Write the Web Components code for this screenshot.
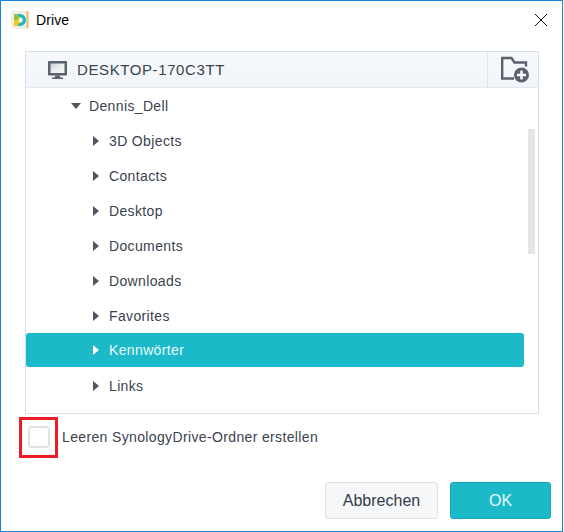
<!DOCTYPE html>
<html>
<head>
<meta charset="utf-8">
<style>
  html, body { margin: 0; padding: 0; background: #fff; }
  body { width: 564px; height: 532px; overflow: hidden; font-family: "Liberation Sans", Arial, sans-serif; }
</style>
</head>
<body>
<drive-dialog>
  <drive-tree host-name="DESKTOP-170C3TT">
    <tree-row level="0" open>Dennis_Dell</tree-row>
    <tree-row>3D Objects</tree-row>
    <tree-row>Contacts</tree-row>
    <tree-row>Desktop</tree-row>
    <tree-row>Documents</tree-row>
    <tree-row>Downloads</tree-row>
    <tree-row>Favorites</tree-row>
    <tree-row selected>Kennwörter</tree-row>
    <tree-row>Links</tree-row>
  </drive-tree>
  <check-row>Leeren SynologyDrive-Ordner erstellen</check-row>
  <div slot="actions" style="display:flex;gap:12px">
    <dlg-button>Abbrechen</dlg-button>
    <dlg-button primary>OK</dlg-button>
  </div>
</drive-dialog>

<script>
class DriveDialog extends HTMLElement {
    connectedCallback() {
        this.attachShadow({ mode: 'open' });
        this.shadowRoot.innerHTML = `
            <style>
                :host {
                    display: flex;
                    flex-direction: column;
                    box-sizing: border-box;
                    width: 563px;
                    height: 532px;
                    border: 1px solid #1883d7;
                    background: #fff;
                    color: #333b47;
                }
                .title {
                    display: flex;
                    align-items: center;
                    height: 38px;
                    padding: 0 0 0 9px;
                    font-size: 14px;
                    letter-spacing: .1px;
                    color: #000;
                }
                .title svg.logo { margin-right: 6px; }
                .title span { flex: 1; }
                .close { margin-right: 14px; }
                .body { padding: 12px 24px 0 24px; }
                .actions { display: flex; justify-content: flex-end; padding: 0 11px 0 0; margin-top: 34px; }
            </style>
            <div class="title">
                <svg class="logo" width="20" height="20" viewBox="0 0 20 20">
                    <rect x="1" y="1" width="17" height="18" rx="1" fill="#f1efe8"/>
                    <rect x="16.5" y="1" width="2" height="17" fill="#e6bd55"/>
                    <path d="M5 4h5a6 6 0 0 1 0 12H5v-3.2h5a2.8 2.8 0 0 0 0-5.6H5z" fill="#19b3c8"/>
                    <path d="M4 4h3.5l2.5 3.2-2 2.8H4z" fill="#8cc63f"/>
                    <path d="M4 10h4l2 2.8L7.5 16H4z" fill="#f2c81e"/>
                </svg>
                <span>Drive</span>
                <svg class="close" width="14" height="14" viewBox="0 0 14 14"><path d="M1 1l12 12M13 1L1 13" stroke="#111" stroke-width="1" fill="none"/></svg>
            </div>
            <div class="body">
                <slot></slot>
            </div>
            <div class="actions"><slot name="actions"></slot></div>
        `;
    }
}

class DriveTree extends HTMLElement {
    connectedCallback() {
        this.attachShadow({ mode: 'open' });
        this.shadowRoot.innerHTML = `
            <style>
                :host {
                    display: block;
                    box-sizing: border-box;
                    width: 514px;
                    height: 363px;
                    border: 1px solid #d3e0ec;
                    overflow: hidden;
                    position: relative;
                }
                header {
                    display: flex;
                    align-items: center;
                    box-sizing: border-box;
                    height: 36px;
                    background: linear-gradient(#f7f9fc, #f1f5f9);
                    border-bottom: 1px solid #e3e9ef;
                    font-size: 15px;
                    letter-spacing: .6px;
                    color: #3a424e;
                }
                .pc { margin: 0 10px 0 21px; }
                .name { flex: 1; }
                .add {
                    box-sizing: border-box;
                    width: 51px;
                    height: 100%;
                    border-left: 1px solid #dfe6ed;
                    display: flex;
                    align-items: center;
                    padding-left: 12px;
                }
                .rows { display: flex; flex-direction: column; }
                .scroll {
                    position: absolute;
                    right: 3px;
                    top: 77px;
                    width: 7px;
                    height: 125px;
                    background: #e5e5e5;
                }
            </style>
            <header>
                <svg class="pc" width="20" height="20" viewBox="0 0 20 20">
                    <defs><linearGradient id="scr" x1="0" y1="0" x2="1" y2="1">
                        <stop offset="0" stop-color="#c9ced3"/><stop offset=".5" stop-color="#eceef0"/><stop offset="1" stop-color="#f7f8f9"/>
                    </linearGradient></defs>
                    <rect x="1" y="1" width="19" height="14.5" rx="1" fill="#5a626d"/>
                    <rect x="3.5" y="3.5" width="14" height="9.5" fill="url(#scr)"/>
                    <path d="M8 15.5h5V18H8zM5 17.5h11V19H5z" fill="#5a626d"/>
                </svg>
                <span class="name">${this.getAttribute('host-name')}</span>
                <div class="add">
                    <svg width="30" height="27" viewBox="0 0 30 27">
                        <path d="M14 22.5H2.2V2h9.3l3 4.5h11.5v4" fill="none" stroke="#5a626d" stroke-width="2.4"/>
                        <circle cx="21.5" cy="19" r="7.5" fill="#5a626d"/>
                        <path d="M21.5 14.5v9M17 19h9" stroke="#fff" stroke-width="2.4"/>
                    </svg>
                </div>
            </header>
            <div class="rows"><slot></slot></div>
            <div class="scroll"></div>
        `;
    }
}

class TreeRow extends HTMLElement {
    connectedCallback() {
        const isRoot = this.getAttribute('level') === '0';
        const open = this.hasAttribute('open');
        this.attachShadow({ mode: 'open' });
        this.shadowRoot.innerHTML = `
            <style>
                :host {
                    display: flex;
                    align-items: center;
                    box-sizing: border-box;
                    height: 35px;
                    font-size: 14px;
                    letter-spacing: .36px;
                    color: #3a424e;
                    padding-left: ${isRoot ? 45 : 67}px;
                }
                :host([selected]) {
                    height: 34px;
                    margin: 0 14px 1px 0;
                    background: #1cb9c8;
                    border-radius: 3px;
                    color: #e9f9fb;
                }
                svg { margin-right: ${open ? 8 : 10}px; }
                path { fill: ${this.hasAttribute('selected') ? '#fff' : '#4e5662'}; }
            </style>
            ${open
                ? '<svg width="10" height="6" viewBox="0 0 10 6"><path d="M0 0h10L5 6z"/></svg>'
                : '<svg width="6" height="10" viewBox="0 0 6 10"><path d="M0 0l6 5-6 5z"/></svg>'}
            <slot></slot>
        `;
    }
}

class CheckRow extends HTMLElement {
    connectedCallback() {
        this.attachShadow({ mode: 'open' });
        this.shadowRoot.innerHTML = `
            <style>
                :host {
                    display: flex;
                    align-items: center;
                    position: relative;
                    height: 22px;
                    margin: 12px 0 0 3px;
                    font-size: 14px;
                    letter-spacing: .36px;
                    color: #3a424e;
                }
                .box {
                    box-sizing: border-box;
                    width: 22px;
                    height: 22px;
                    margin-right: 12px;
                    border: 2px solid #e2e2e2;
                    border-radius: 4px;
                    background: #fff;
                }
                .mark {
                    position: absolute;
                    left: -9px;
                    top: -9px;
                    width: 39px;
                    height: 41px;
                    box-sizing: border-box;
                    border: 3px solid #ed1c24;
                }
            </style>
            <div class="box"></div>
            <slot></slot>
            <div class="mark"></div>
        `;
    }
}

class DlgButton extends HTMLElement {
    connectedCallback() {
        this.attachShadow({ mode: 'open' });
        this.shadowRoot.innerHTML = `
            <style>
                :host {
                    display: inline-flex;
                    align-items: center;
                    justify-content: center;
                    box-sizing: border-box;
                    width: 113px;
                    height: 37px;
                    border: 1px solid #dcdfe3;
                    border-radius: 3px;
                    background: #f6f7f9;
                    font-size: 16px;
                    color: #333b47;
                }
                :host([primary]) {
                    width: 101px;
                    background: #1cb9c8;
                    border-color: #17a8b6;
                    color: #e4f8fa;
                }
            </style>
            <slot></slot>
        `;
    }
}

customElements.define('drive-dialog', DriveDialog);
customElements.define('drive-tree', DriveTree);
customElements.define('tree-row', TreeRow);
customElements.define('check-row', CheckRow);
customElements.define('dlg-button', DlgButton);
</script>
</body>
</html>
